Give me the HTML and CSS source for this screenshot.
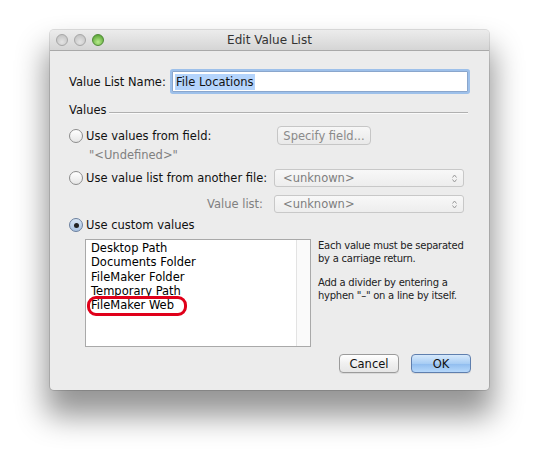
FILE: index.html
```html
<!DOCTYPE html>
<html>
<head>
<meta charset="utf-8">
<link rel="stylesheet" href="styles.css">
</head>
<body>
<div class="window">
  <div class="titlebar">
    <div class="lights">
      <span class="light"></span>
      <span class="light"></span>
      <span class="light green"></span>
    </div>
    <div class="title">Edit Value List</div>
  </div>
  <div class="content">
    <div class="name-row">
      <span class="label">Value List Name:</span>
      <div class="textfield"><span class="sel">File Locations</span></div>
    </div>
    <div class="group-head">
      <span>Values</span>
      <span class="rule"></span>
    </div>
    <div class="row row-field">
      <label class="radio-label wide"><span class="radio"></span>Use values from field:</label>
      <div class="button disabled">Specify field...</div>
    </div>
    <div class="undefined">"&lt;Undefined&gt;"</div>
    <div class="row row-file">
      <label class="radio-label col"><span class="radio"></span>Use value list from another file:</label>
      <div class="popup"><span>&lt;unknown&gt;</span><svg class="arrows" width="5" height="9" viewBox="0 0 5 9"><path d="M0.5 3.5 L2.5 1 L4.5 3.5" fill="none" stroke="#9a9a9a" stroke-width="1"/><path d="M0.5 5.5 L2.5 8 L4.5 5.5" fill="none" stroke="#9a9a9a" stroke-width="1"/></svg></div>
    </div>
    <div class="row row-list">
      <span class="sublabel">Value list:</span>
      <div class="popup"><span>&lt;unknown&gt;</span><svg class="arrows" width="5" height="9" viewBox="0 0 5 9"><path d="M0.5 3.5 L2.5 1 L4.5 3.5" fill="none" stroke="#9a9a9a" stroke-width="1"/><path d="M0.5 5.5 L2.5 8 L4.5 5.5" fill="none" stroke="#9a9a9a" stroke-width="1"/></svg></div>
    </div>
    <div class="row row-custom">
      <label class="radio-label"><span class="radio on"></span>Use custom values</label>
    </div>
    <div class="custom">
      <div class="textarea">
        <div class="lines">
          <div>Desktop Path</div>
          <div>Documents Folder</div>
          <div>FileMaker Folder</div>
          <div>Temporary Path</div>
          <div class="marked">FileMaker Web<span class="oval"></span></div>
        </div>
        <div class="scrolltrack"></div>
      </div>
      <div class="help">
        <p>Each value must be separated<br>by a carriage return.</p>
        <p>Add a divider by entering a<br>hyphen "–" on a line by itself.</p>
      </div>
    </div>
    <div class="buttons">
      <div class="button push">Cancel</div>
      <div class="button push default">OK</div>
    </div>
  </div>
</div>
</body>
</html>
```

FILE: styles.css
```css
html, body {
  margin: 0;
  padding: 0;
  background: #ffffff;
}
body {
  width: 540px;
  height: 461px;
  overflow: hidden;
  font-family: "DejaVu Sans", "Open Sans", sans-serif;
  font-size: 11.5px;
  color: #111;
}
.window {
  margin: 30px 0 0 50px;
  width: 439px;
  height: 360px;
  background: #ececec;
  border-radius: 4px;
  box-shadow: 0 0 0 1px rgba(0,0,0,0.12), 0 22px 30px 4px rgba(0,0,0,0.42);
  overflow: hidden;
  display: flex;
  flex-direction: column;
}
.titlebar {
  height: 20px;
  flex: none;
  background: linear-gradient(#ececec, #d5d5d5);
  border-bottom: 1px solid #a9a9a9;
  display: flex;
  align-items: center;
  position: relative;
}
.lights {
  display: flex;
  gap: 6px;
  padding-left: 6px;
}
.light {
  width: 12px;
  height: 12px;
  border-radius: 50%;
  box-sizing: border-box;
  background: radial-gradient(circle at 50% 70%, #e4e4e4, #bdbdbd);
  border: 1px solid #a6a6a6;
}
.light.green {
  background: radial-gradient(circle at 50% 70%, #b8ec8c, #5ea83a 80%);
  border-color: #4f8a36;
}
.title {
  position: absolute;
  left: 0;
  right: 0;
  text-align: center;
  font-size: 12px;
  color: #333;
  pointer-events: none;
}
.content {
  padding: 20px 21px 0 19px;
  display: flex;
  flex-direction: column;
}
.name-row {
  display: flex;
  align-items: center;
  height: 21px;
}
.label {
  width: 103px;
  flex: none;
}
.textfield {
  flex: 1;
  height: 21px;
  box-sizing: border-box;
  background: #fff;
  border: 1px solid #8aa6cc;
  box-shadow: 0 0 0 2px #9dc0ea;
  border-radius: 1px;
  display: flex;
  align-items: center;
  padding-left: 2px;
}
.sel {
  background: #b4d4fc;
  padding: 1px 1px;
}
.group-head {
  display: flex;
  align-items: center;
  margin-top: 11px;
  height: 14px;
}
.rule {
  flex: 1;
  height: 0;
  border-top: 1px solid #b0b0b0;
  border-bottom: 1px solid #fafafa;
  margin-left: 2px;
  margin-top: 6px;
}
.row {
  display: flex;
  align-items: center;
}
.row-field {
  margin-top: 9px;
  height: 19px;
}
.radio-label {
  display: flex;
  align-items: center;
  gap: 3px;
  flex: none;
}
.radio-label.wide {
  width: 208px;
}
.radio-label.col {
  width: 205px;
}
.radio {
  width: 14px;
  height: 14px;
  box-sizing: border-box;
  border-radius: 50%;
  border: 1px solid #8d8d8d;
  background: linear-gradient(#fff, #e6e6e6);
  display: inline-flex;
  align-items: center;
  justify-content: center;
  flex: none;
}
.radio.on {
  border-color: #6a7f9e;
  background: linear-gradient(#d8e6f5, #a9c3e2);
}
.radio.on::after {
  content: "";
  width: 5px;
  height: 5px;
  border-radius: 50%;
  background: #222;
}
.button {
  box-sizing: border-box;
  border-radius: 4px;
  display: flex;
  align-items: center;
  justify-content: center;
}
.button.disabled {
  width: 94px;
  height: 19px;
  border: 1px solid #c6c6c6;
  background: linear-gradient(#f7f7f7, #e9e9e9);
  color: #8a8a8a;
}
.undefined {
  margin: 1px 0 0 20px;
  height: 18px;
  line-height: 18px;
  color: #808080;
}
.row-file {
  margin-top: 5px;
  height: 18px;
}
.popup {
  width: 190px;
  height: 18px;
  box-sizing: border-box;
  border: 1px solid #c8c8c8;
  border-radius: 3px;
  background: linear-gradient(#f8f8f8, #ededed);
  color: #7e7e7e;
  display: flex;
  align-items: center;
  justify-content: space-between;
  padding: 0 6px 0 8px;
  flex: none;
}
.arrows {
  display: block;
}
.row-list {
  margin-top: 8px;
  height: 18px;
}
.sublabel {
  width: 205px;
  flex: none;
  text-align: right;
  color: #808080;
  padding-right: 11px;
  box-sizing: border-box;
}
.row-custom {
  margin-top: 5px;
  height: 14px;
}
.custom {
  display: flex;
  margin-top: 7px;
  margin-left: 16px;
}
.textarea {
  width: 226px;
  height: 108px;
  box-sizing: border-box;
  border: 1px solid #a9a9a9;
  background: #fff;
  display: flex;
}
.lines {
  flex: 1;
  padding: 1px 0 0 5px;
  line-height: 14.3px;
  color: #000;
}
.marked {
  position: relative;
}
.oval {
  position: absolute;
  left: -4px;
  top: -2px;
  width: 100px;
  height: 20px;
  box-sizing: border-box;
  border: 3px solid #e0001a;
  border-radius: 9px;
}
.scrolltrack {
  width: 13px;
  border-left: 1px solid #e3e3e3;
  background: #fafafa;
}
.help {
  margin-left: 7px;
  white-space: nowrap;
  font-size: 10px;
  letter-spacing: -0.25px;
  line-height: 13px;
  color: #222;
}
.help p {
  margin: 0 0 11px 0;
}
.buttons {
  display: flex;
  justify-content: flex-end;
  gap: 12px;
  margin-top: 7px;
  margin-right: -3px;
}
.button.push {
  width: 60px;
  height: 19px;
  border: 1px solid #9b9b9b;
  background: linear-gradient(#ffffff, #f0f0f0 50%, #e6e6e6);
  box-shadow: 0 1px 0 rgba(0,0,0,0.08);
  color: #111;
}
.button.push.default {
  border-color: #5f7fae;
  background: linear-gradient(#d7e9fb, #a8cdf4 50%, #8fbcee 51%, #b6d8fb);
}
```
